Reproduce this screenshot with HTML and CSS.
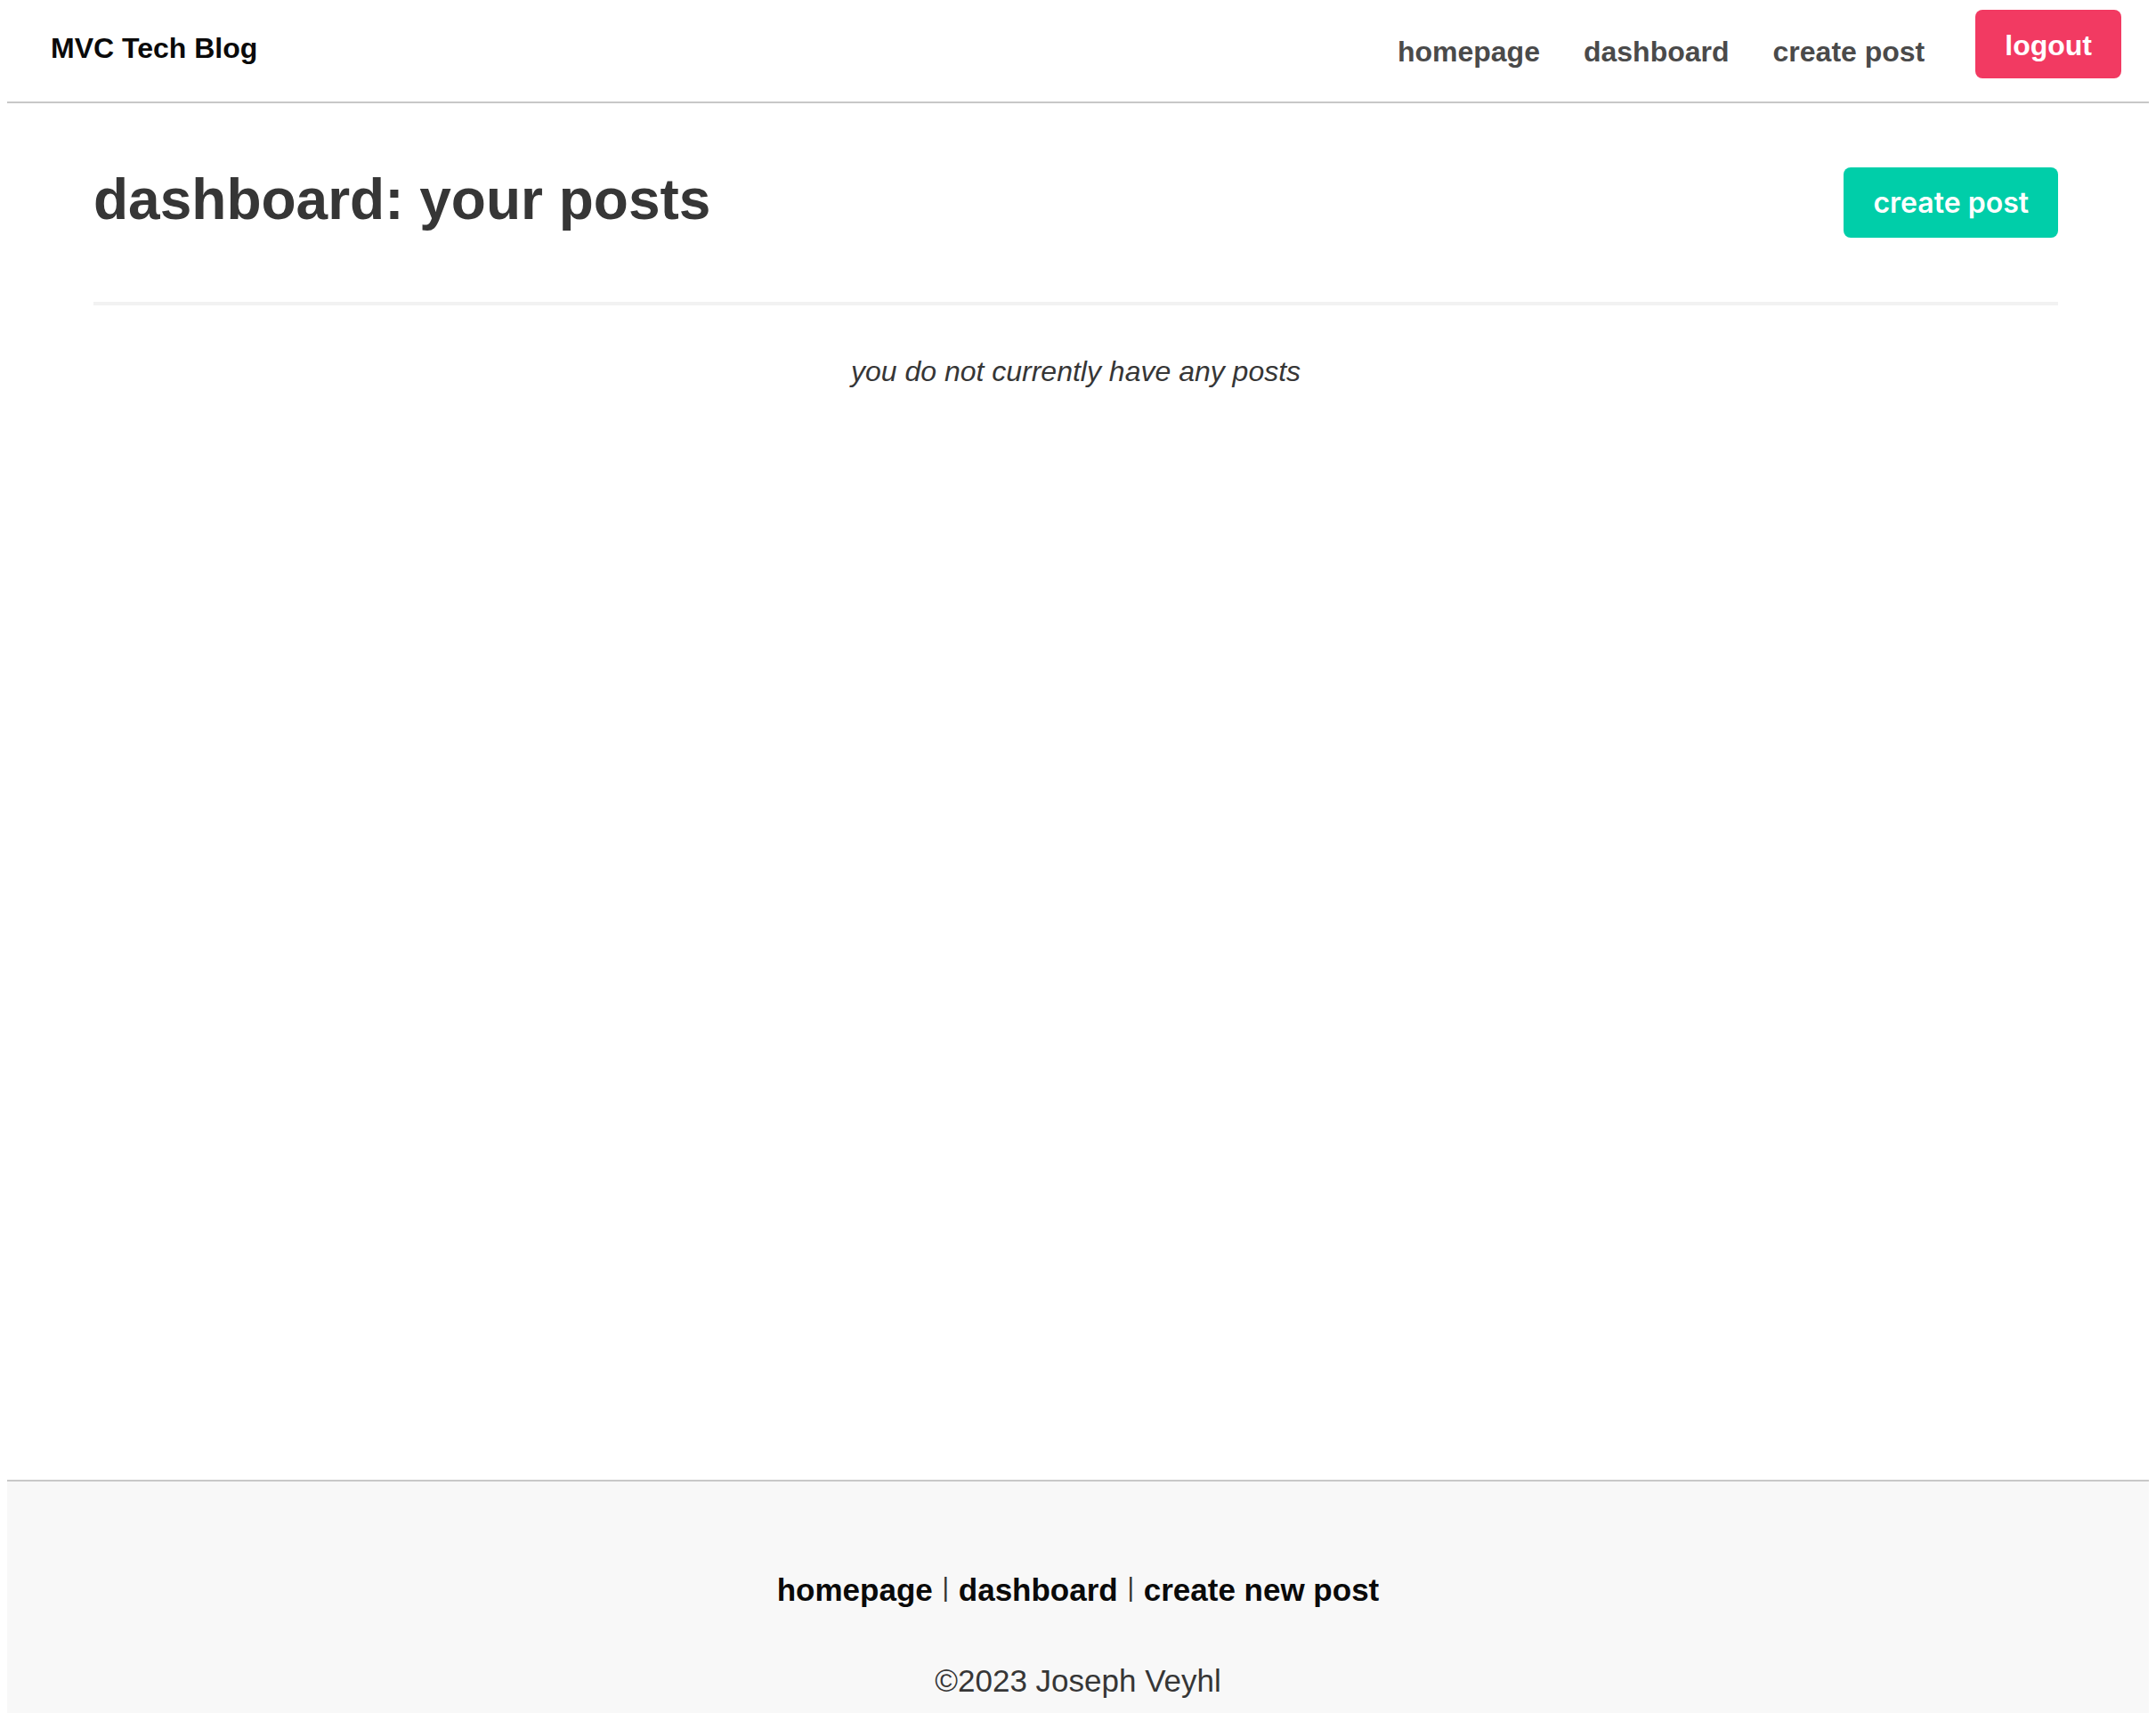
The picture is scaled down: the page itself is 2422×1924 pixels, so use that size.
FILE: index.html
```html
<!DOCTYPE html>
<html lang="en">
<head>
<meta charset="utf-8">
<title>MVC Tech Blog</title>
<link rel="stylesheet" href="styles.css">
</head>
<body>
<header class="navbar">
  <a class="brand" href="#">MVC Tech Blog</a>
  <nav class="nav">
    <a class="nav-link" href="#">homepage</a>
    <a class="nav-link" href="#">dashboard</a>
    <a class="nav-link" href="#">create post</a>
    <a class="btn btn-danger" href="#">logout</a>
  </nav>
</header>
<main class="main">
  <div class="container">
    <div class="title-row">
      <h1 class="title">dashboard: your posts</h1>
      <button class="btn-primary" type="button">create post</button>
    </div>
    <hr class="divider">
    <p class="empty">you do not currently have any posts</p>
  </div>
</main>
<footer class="footer">
  <p class="footer-links"><a href="#">homepage</a> <span class="sep">|</span> <a href="#">dashboard</a> <span class="sep">|</span> <a href="#">create new post</a></p>
  <p class="copyright">©2023 Joseph Veyhl</p>
</footer>
</body>
</html>
```

FILE: styles.css
```css
* { box-sizing: border-box; }

html { background: #fff; }

body {
  margin: 8px;
  font-family: "Liberation Sans", Arial, Helvetica, sans-serif;
  color: #363636;
  font-size: 32px;
  line-height: 48px;
}

a { text-decoration: none; }

.navbar {
  display: flex;
  align-items: flex-start;
  height: 108px;
  padding: 0 31px 0 49px;
  border-bottom: 2px solid #c8c8c8;
}

.brand {
  margin-top: 22px;
  font-weight: 700;
  color: #0a0a0a;
}

.nav {
  margin-left: auto;
  display: flex;
  align-items: flex-start;
  gap: 49px;
}

.nav-link {
  margin-top: 26px;
  font-weight: 700;
  color: #4a4a4a;
}

.btn {
  display: block;
  margin-top: 3px;
  margin-left: 8px;
  height: 77px;
  padding: 16px 33px 13px;
  border-radius: 8px;
  font-weight: 700;
  color: #fff;
}

.btn-danger { background: #f23a62; }

.main {
  min-height: 1546px;
  padding-top: 72px;
}

.container {
  margin: 0 102px 0 97px;
}

.title-row {
  display: flex;
  align-items: center;
  justify-content: space-between;
}

.title {
  margin: 0;
  padding-bottom: 7px;
  font-size: 64px;
  line-height: 72px;
  font-weight: 700;
  color: #363636;
}

.btn-primary {
  height: 79px;
  padding: 0 33px;
  border: none;
  border-radius: 8px;
  background: #00cea9;
  color: #fff;
  font-family: Inter, "Liberation Sans", sans-serif;
  font-size: 32px;
  font-weight: 600;
  line-height: 48px;
}

.divider {
  margin: 72px 0 0;
  height: 4px;
  border: none;
  background: #f2f2f2;
}

.empty {
  margin: 50px 0 0;
  text-align: center;
  font-style: italic;
  color: #363636;
}

.footer {
  border-top: 2px solid #c8c8c8;
  background: #f8f8f8;
  padding: 96px 48px 192px;
  text-align: center;
  font-size: 35px;
  line-height: 52px;
}

.footer-links {
  margin: 0;
  font-weight: 700;
}

.footer-links a { color: #0a0a0a; }

.sep {
  margin: 0 1px;
  font-size: 29px;
  line-height: 1;
  font-weight: 400;
  vertical-align: 5px;
  color: #333;
}

.copyright {
  margin: 50px 0 0;
  color: #363636;
}
```
